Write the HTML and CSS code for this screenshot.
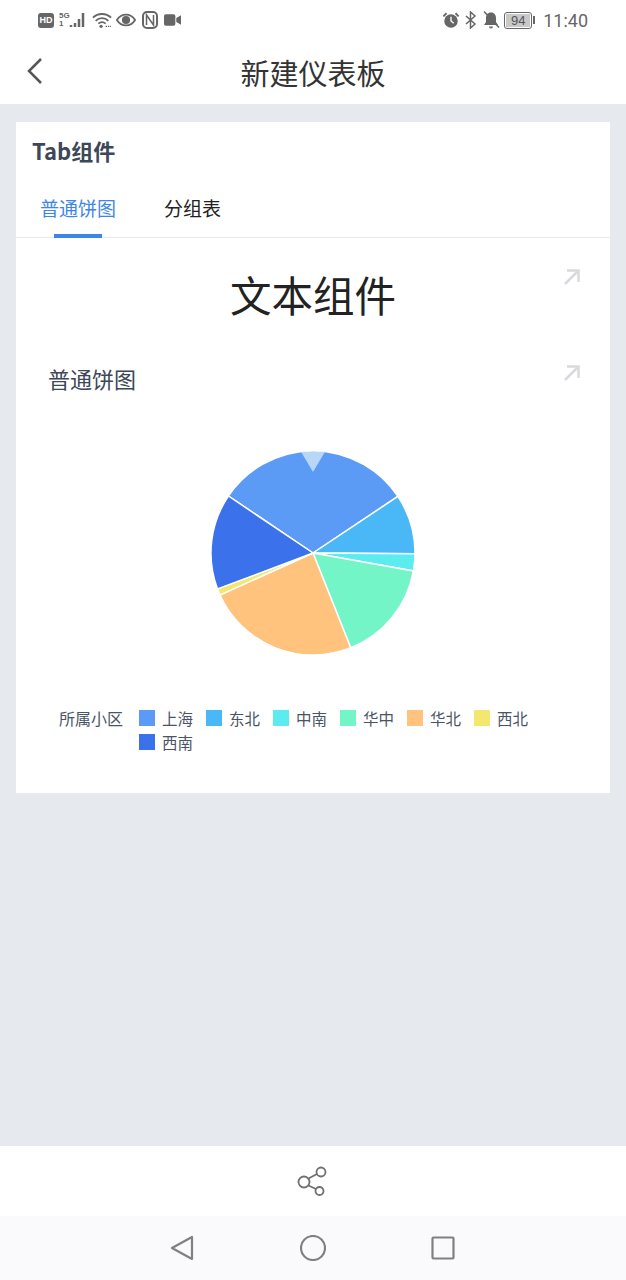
FILE: index.html
```html
<!DOCTYPE html>
<html lang="zh-CN">
<head>
    <meta charset="UTF-8">
    <meta name="viewport" content="width=device-width, initial-scale=1.0">
    <title>新建仪表板</title>
    <link rel="stylesheet" href="styles.css">
</head>
<body>
<div class="phone">
    <div class="status-bar">
        <div class="status-left">
            <span class="hd-badge">HD</span>
            <div class="signal">
                <span class="signal-text">5G<br>1</span>
                <svg class="icon-signal" viewBox="0 0 18 16"><path d="M2 15v-2M6 15v-4M10 15V7M14 15V1" /></svg>
            </div>
            <svg class="icon-wifi" viewBox="0 0 22 18"><path d="M1 6.500C6.500 1 15.500 1 21 6.500M4 10c4-4 10-4 14 0M7 13c2.500-2 5.500-2 8 0" /><circle cx="10" cy="16" r="1.800" /><path class="thin" d="M15 16h6" /></svg>
            <svg class="icon-eye" viewBox="0 0 22 16"><path d="M1 8c5-8 15-8 20 0-5 8-15 8-20 0z" /><circle class="fill" cx="11" cy="8" r="4.500" /></svg>
            <svg class="icon-nfc" viewBox="0 0 16 18"><rect x="1" y="1" width="14" height="16" rx="4" /><path d="M4.500 14V4l7 10V4" /></svg>
            <svg class="icon-video" viewBox="0 0 18 14"><rect class="fill" x="0" y="1" width="12" height="12" rx="2" /><path class="fill" d="M13 5l5-3v10l-5-3z" /></svg>
        </div>
        <div class="status-right">
            <svg class="icon-alarm" viewBox="0 0 20 18"><circle class="fill" cx="10" cy="10" r="7.500" /><path class="white" d="M10 5.500V10l3 2.500" /><path d="M1.500 5L5 1.500M18.500 5L15 1.500" /></svg>
            <svg class="icon-bt" viewBox="0 0 12 18"><path d="M1 5l9 8-4.500 4V1L10 5l-9 8" /></svg>
            <svg class="icon-bell" viewBox="0 0 18 18"><path class="fill" d="M9 1.500c3.500 0 5 2.500 5 5.500v4l2 3H2l2-3V7c0-3 1.500-5.500 5-5.500z" /><path class="fill" d="M7 15.500h4a2 2 0 0 1-4 0z" /><path class="slash" d="M2 .5l15 16" /></svg>
            <div class="battery"><span class="battery-level">94</span></div>
            <span class="battery-tip"></span>
            <span class="clock">11:40</span>
        </div>
    </div>

    <header class="title-bar">
        <svg class="back-icon" viewBox="0 0 18 30"><path d="M15 3L3 15l12 12" /></svg>
        <h1>新建仪表板</h1>
    </header>

    <main class="content">
        <section class="card">
            <h2 class="card-title">Tab组件</h2>
            <div class="tabs">
                <div class="tab active">普通饼图</div>
                <div class="tab">分组表</div>
            </div>

            <div class="text-block">
                文本组件
                <svg class="expand-icon" viewBox="0 0 16 16"><path d="M1 15L14.500 1.500M3 1.500h11.500V13" /></svg>
            </div>

            <div class="chart-block">
                <div class="chart-title">普通饼图</div>
                <svg class="expand-icon" viewBox="0 0 16 16"><path d="M1 15L14.500 1.500M3 1.500h11.500V13" /></svg>
                <svg class="pie" viewBox="-113 -113 226 226">
                    <path fill="#5b9bf5" d="M0 0L-84.600 -57A102 102 0 0 1 84.900 -56.600Z" />
                    <path fill="#4ab8f7" d="M0 0L84.900 -56.600A102 102 0 0 1 102 .7Z" />
                    <path fill="#5cecf0" d="M0 0L102 .7A102 102 0 0 1 100.400 17.900Z" />
                    <path fill="#73f5c7" d="M0 0L100.400 17.900A102 102 0 0 1 37.700 94.800Z" />
                    <path fill="#ffc37e" d="M0 0L37.700 94.800A102 102 0 0 1 -93 42Z" />
                    <path fill="#f5e66e" d="M0 0L-93 42A102 102 0 0 1 -95.500 35.900Z" />
                    <path fill="#3b72ec" d="M0 0L-95.500 35.900A102 102 0 0 1 -84.600 -57Z" />
                    <path class="pie-marker" d="M-12 -101.300H12L0 -81Z" />
                </svg>
                <div class="legend">
                    <div class="legend-label">所属小区</div>
                    <div class="legend-items">
                        <div class="legend-item"><span class="swatch c1"></span>上海</div>
                        <div class="legend-item"><span class="swatch c2"></span>东北</div>
                        <div class="legend-item"><span class="swatch c3"></span>中南</div>
                        <div class="legend-item"><span class="swatch c4"></span>华中</div>
                        <div class="legend-item"><span class="swatch c5"></span>华北</div>
                        <div class="legend-item"><span class="swatch c6"></span>西北</div>
                        <div class="legend-item"><span class="swatch c7"></span>西南</div>
                    </div>
                </div>
            </div>
        </section>
    </main>

    <div class="share-bar">
        <svg class="share-icon" viewBox="0 0 32 32"><circle cx="7" cy="17" r="5.500" /><circle cx="24" cy="7" r="4.500" /><circle cx="22.500" cy="26" r="4" /><path d="M11.500 13.500L20 9M11.500 20.500L19 24" /></svg>
    </div>
    <nav class="nav-bar">
        <svg class="nav-icon" viewBox="0 0 24 26"><path d="M21 2v22L1 13z" /></svg>
        <svg class="nav-icon" viewBox="0 0 26 26"><circle cx="13" cy="13" r="12" /></svg>
        <svg class="nav-icon" viewBox="0 0 26 26"><rect x="2.500" y="2.500" width="21" height="21" rx="1" /></svg>
    </nav>
</div>
</body>
</html>
```

FILE: styles.css
```css
body {
    margin: 0;
    font-family: "Noto Sans CJK SC", "Noto Sans", sans-serif;
    background-color: #e6e9ed;
}

.phone {
    display: flex;
    flex-direction: column;
    height: 1280px;
    overflow: hidden;
}

/* status bar */
.status-bar {
    display: flex;
    justify-content: space-between;
    align-items: center;
    height: 40px;
    padding: 0 38px;
    background-color: #fff;
}

.status-left, .status-right {
    display: flex;
    align-items: center;
}

.status-bar svg {
    fill: none;
    stroke: #666;
    stroke-width: 2;
}

.status-bar svg .fill {
    fill: #666;
    stroke: none;
}

.status-bar svg .white {
    stroke: #fff;
    stroke-width: 1.500;
}

.status-bar svg .slash {
    stroke: #666;
    stroke-width: 1.500;
}

.hd-badge {
    width: 16px;
    height: 15px;
    border-radius: 3px;
    background-color: #666;
    color: #fff;
    font-family: "Liberation Sans", sans-serif;
    font-size: 9px;
    font-weight: bold;
    line-height: 15px;
    text-align: center;
}

.signal {
    display: flex;
    align-items: flex-end;
    margin-left: 5px;
}

.signal-text {
    font-family: "Liberation Sans", sans-serif;
    font-size: 8px;
    font-weight: bold;
    line-height: 8px;
    color: #666;
}

.status-bar .icon-signal {
    width: 18px;
    height: 16px;
    margin-left: -1px;
    stroke-width: 2.500;
}

.icon-wifi {
    width: 20px;
    height: 18px;
    margin-left: 5px;
}

.icon-wifi circle {
    fill: #666;
    stroke: none;
}

.icon-wifi .thin {
    stroke-width: 1.500;
    stroke-dasharray: 1.500 1;
}

.icon-eye {
    width: 20px;
    height: 16px;
    margin-left: 4px;
}

.icon-nfc {
    width: 16px;
    height: 18px;
    margin-left: 6px;
}

.icon-nfc path {
    stroke-width: 1.500;
}

.icon-video {
    width: 17px;
    height: 14px;
    margin-left: 6px;
}

.icon-alarm {
    width: 18px;
    height: 18px;
}

.status-bar .icon-bt {
    width: 12px;
    height: 18px;
    margin-left: 5px;
    stroke-width: 1.500;
}

.icon-bell {
    width: 18px;
    height: 18px;
    margin-left: 5px;
}

.battery {
    width: 24px;
    height: 13px;
    margin-left: 4px;
    padding: 1px;
    border: 1.500px solid #666;
    border-radius: 3px;
}

.battery-level {
    display: block;
    width: 24px;
    height: 13px;
    background-color: #c8c8c8;
    color: #555;
    font-family: "Liberation Sans", sans-serif;
    font-size: 13px;
    line-height: 13px;
    text-align: center;
}

.battery-tip {
    width: 2px;
    height: 8px;
    margin-left: 1px;
    background-color: #666;
}

.clock {
    margin-left: 8px;
    color: #666;
    font-family: Roboto, sans-serif;
    font-size: 18px;
}

/* title bar */
.title-bar {
    position: relative;
    height: 64px;
    background-color: #fff;
}

.title-bar h1 {
    margin: 0;
    color: #333;
    font-size: 29px;
    font-weight: 400;
    line-height: 64px;
    text-align: center;
}

.back-icon {
    position: absolute;
    left: 26px;
    top: 16px;
    width: 18px;
    height: 30px;
    fill: none;
    stroke: #555;
    stroke-width: 2.500;
}

/* content */
.content {
    flex: 1;
    padding: 18px 16px 0;
}

.card {
    height: 671px;
    background-color: #fff;
}

.card-title {
    margin: 0;
    padding: 12px 16px 0;
    color: #3d4757;
    font-size: 22px;
    font-weight: 700;
    line-height: 32px;
}

.tabs {
    display: flex;
    height: 72px;
    border-bottom: 1px solid #e6e9ed;
    box-sizing: border-box;
    padding-left: 15px;
}

.tab {
    position: relative;
    margin-right: 30px;
    padding: 17px 9px 0;
    color: #222;
    font-size: 19px;
    line-height: 50px;
}

.tab.active {
    color: #3d86e8;
}

.tab.active::after {
    content: "";
    position: absolute;
    left: 23px;
    right: 23px;
    bottom: -1px;
    height: 4px;
    background-color: #3d86e8;
}

.text-block {
    position: relative;
    height: 108px;
    color: #222;
    font-size: 41.500px;
    line-height: 112px;
    text-align: center;
}

.expand-icon {
    position: absolute;
    top: 31px;
    right: 30px;
    width: 16px;
    height: 16px;
    fill: none;
    stroke: #d9dadd;
    stroke-width: 2.500;
}

.chart-block {
    position: relative;
}

.chart-block .expand-icon {
    top: 19px;
}

.chart-title {
    padding: 14px 0 0 32px;
    color: #3d4757;
    font-size: 22px;
    line-height: 36px;
}

.pie {
    display: block;
    width: 226px;
    height: 226px;
    margin: 44px auto 0;
}

.pie path {
    stroke: #fff;
    stroke-width: 1.500;
}

.pie .pie-marker {
    fill: #b8d6f8;
    stroke: none;
}

.legend {
    display: flex;
    margin-top: 40px;
    padding-left: 43px;
    color: #4a5464;
    font-size: 16px;
    line-height: 24px;
}

.legend-label {
    width: 80px;
}

.legend-items {
    display: flex;
    flex-wrap: wrap;
    width: 410px;
}

.legend-item {
    display: flex;
    align-items: center;
    width: 67px;
    font-size: 15.500px;
}

.swatch {
    width: 16px;
    height: 16px;
    margin-right: 7px;
}

.c1 { background-color: #5b9bf5; }
.c2 { background-color: #4ab8f7; }
.c3 { background-color: #5cecf0; }
.c4 { background-color: #73f5c7; }
.c5 { background-color: #ffc37e; }
.c6 { background-color: #f5e66e; }
.c7 { background-color: #3b72ec; }

/* bottom bars */
.share-bar {
    display: flex;
    justify-content: center;
    align-items: center;
    height: 70px;
    background-color: #fff;
}

.share-icon {
    width: 32px;
    height: 32px;
    fill: none;
    stroke: #707070;
    stroke-width: 1.800;
}

.nav-bar {
    display: flex;
    justify-content: center;
    align-items: center;
    gap: 104px;
    height: 64px;
    background-color: #fafafd;
}

.nav-icon {
    width: 26px;
    height: 26px;
    fill: none;
    stroke: #808080;
    stroke-width: 2.200;
    stroke-linejoin: round;
}
```
